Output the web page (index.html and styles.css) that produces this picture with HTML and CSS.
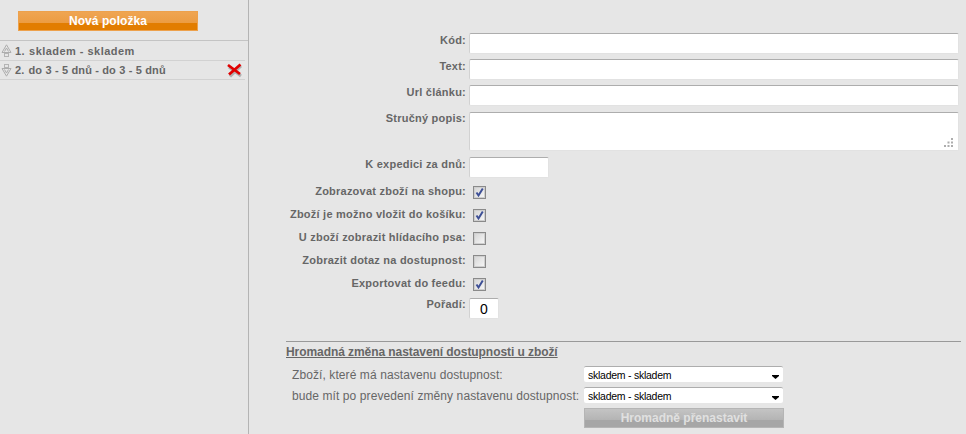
FILE: index.html
```html
<!DOCTYPE html>
<html lang="cs">
<head>
<meta charset="utf-8">
<title>Dostupnost</title>
<link rel="stylesheet" href="styles.css">
</head>
<body>
<div class="page">
  <aside class="sidebar">
    <button class="btn-orange" type="button">Nová položka</button>
    <ul class="items">
      <li class="item item-first">
        <svg class="arrow" width="11" height="13" viewBox="0 0 11 13"><path d="M5.500 0.800 L10 8.500 H1 Z M5.500 4 L3.500 7.500 M5.500 4 L7.500 7.500" fill="none" stroke="#adadad"/><rect x="3.500" y="9.500" width="4" height="3" fill="none" stroke="#b4b4b4"/></svg>
        <span class="num">1.</span><span>skladem - skladem</span>
      </li>
      <li class="item item-second">
        <svg class="arrow" width="11" height="13" viewBox="0 0 11 13"><rect x="3.500" y="0.500" width="4" height="3" fill="none" stroke="#b4b4b4"/><path d="M5.500 12.200 L10 4.500 H1 Z M5.500 9 L3.500 5.500 M5.500 9 L7.500 5.500" fill="none" stroke="#adadad"/></svg>
        <span class="num">2.</span><span>do 3 - 5 dnů - do 3 - 5 dnů</span>
        <svg class="del" width="17" height="15" viewBox="0 0 17 15"><path d="M3 4 L15 13 M15 3 L4 13.500" stroke="#8c8c8c" stroke-width="3" fill="none" opacity=".6"/><path d="M2 2 L14 11 M14.500 1.500 L3 11.500" stroke="#e00000" stroke-width="2.800" fill="none"/></svg>
      </li>
    </ul>
  </aside>
  <main class="content">
    <form class="form">
      <div class="row row-text"><label class="lbl">Kód:</label><input class="field" type="text"></div>
      <div class="row row-text"><label class="lbl">Text:</label><input class="field" type="text"></div>
      <div class="row row-text row-before-area"><label class="lbl">Url článku:</label><input class="field" type="text"></div>
      <div class="row row-area"><label class="lbl lbl-tight">Stručný popis:</label>
        <div class="area-wrap"><textarea class="field area"></textarea>
          <svg class="grip" width="9" height="9" viewBox="0 0 9 9"><path d="M7 0h2v2H7zM3.500 3.500h2v2h-2zM7 3.500h2v2H7zM0 7h2v2H0zM3.500 7h2v2h-2zM7 7h2v2H7z" fill="#adadad"/></svg>
        </div>
      </div>
      <div class="row row-text row-exped"><label class="lbl">K expedici za dnů:</label><input class="field short" type="text"></div>
      <div class="row row-check"><label class="lbl">Zobrazovat zboží na shopu:</label><input class="check" type="checkbox" checked></div>
      <div class="row row-check"><label class="lbl">Zboží je možno vložit do košíku:</label><input class="check" type="checkbox" checked></div>
      <div class="row row-check"><label class="lbl">U zboží zobrazit hlídacího psa:</label><input class="check" type="checkbox"></div>
      <div class="row row-check"><label class="lbl">Zobrazit dotaz na dostupnost:</label><input class="check" type="checkbox"></div>
      <div class="row row-check last-check"><label class="lbl">Exportovat do feedu:</label><input class="check" type="checkbox" checked></div>
      <div class="row row-order"><label class="lbl lbl-tight">Pořadí:</label><input class="field tiny" type="text" value="0"></div>
    </form>
    <section class="bulk">
      <h2 class="bulk-title">Hromadná změna nastavení dostupnosti u zboží</h2>
      <div class="bulk-row"><span class="bulk-lbl">Zboží, které má nastavenu dostupnost:</span><select class="sel"><option>skladem - skladem</option></select></div>
      <div class="bulk-row"><span class="bulk-lbl">bude mít po prevedení změny nastavenu dostupnost:</span><select class="sel"><option>skladem - skladem</option></select></div>
      <div class="bulk-row"><span class="bulk-lbl"></span><button class="btn-grey" type="button">Hromadně přenastavit</button></div>
    </section>
  </main>
</div>
</body>
</html>
```
FILE: styles.css
```css
* { box-sizing: border-box; }
html, body { margin: 0; padding: 0; }
body {
  width: 966px;
  height: 434px;
  overflow: hidden;
  background: #e6e6e6;
  font-family: "Liberation Sans", Arial, sans-serif;
  color: #666;
}
.page { display: flex; height: 434px; }
.sidebar {
  width: 249px;
  flex: none;
  border-right: 1px solid #b4b4b4;
  padding-top: 11px;
}
.btn-orange {
  display: block;
  width: 180px;
  height: 20px;
  margin: 0 0 9px 18px;
  padding: 0;
  border: 1px solid #eda14c;
  background: linear-gradient(#efa552 0, #ec9c42 60%, #e27d00 60%, #e27d00 100%);
  color: #fff;
  font: bold 12px/17px "Liberation Sans", Arial, sans-serif;
  letter-spacing: .05px;
  text-align: center;
}
.items { list-style: none; margin: 0; padding: 0; border-top: 1px solid #c4c4c4; }
.item {
  display: flex;
  align-items: center;
  width: 245px;
  border-bottom: 1px solid #d2d2d2;
  font-size: 11px;
  font-weight: bold;
  padding-left: 1px;
}
.item-first { height: 20px; letter-spacing: .46px; }
.item-second { height: 19px; letter-spacing: .15px; }
.arrow { flex: none; margin-right: 3px; }
.num { margin-right: 4px; }
.del { margin-left: auto; margin-right: 2px; }
.content { flex: 1; padding: 33px 5px 0 37px; min-width: 0; }
.row { display: flex; align-items: flex-start; }
.lbl {
  flex: none;
  width: 180px;
  margin-right: 3px;
  text-align: right;
  font-size: 11px;
  font-weight: bold;
  line-height: 13px;
  padding-top: 1px;
  letter-spacing: .23px;
  white-space: nowrap;
}
.lbl-tight { padding-top: 0; }
.field {
  display: block;
  width: 490px;
  height: 21px;
  margin: 0;
  padding: 1px 3px;
  background: #fff;
  border: 1px solid #e2e2e2;
  border-top-color: #adadad;
  border-left-color: #d2d2d2;
  border-radius: 2px;
  font: 14px "Liberation Sans", Arial, sans-serif;
  color: #000;
  outline: none;
}
.row-text { margin-bottom: 5px; }
.row-before-area { margin-bottom: 6px; }
.row-area { margin-bottom: 6px; }
.area-wrap { position: relative; width: 490px; height: 39px; }
.area { height: 39px; resize: none; }
.grip { position: absolute; right: 6px; bottom: 4px; }
.short { width: 80px; }
.tiny { width: 30px; text-align: center; padding: 1px 0; }
.row-exped { margin-bottom: 7px; }
.row-check { height: 23px; }
.last-check { height: 21px; }
.row-check .lbl { padding-top: 0; }
.check {
  appearance: none;
  -webkit-appearance: none;
  flex: none;
  width: 13px;
  height: 13px;
  margin: 1px 0 0 4px;
  border: 1px solid #8a8a8a;
  box-shadow: inset 0 0 0 1px #cfcfcf;
  background: linear-gradient(135deg, #d4d4d4, #f8f8f8);
}
.check:checked {
  background:
    url("data:image/svg+xml,%3Csvg xmlns='http://www.w3.org/2000/svg' width='11' height='11'%3E%3Cpath d='M2.500 5.500 L4.500 8.500 L8.800 1.500' fill='none' stroke='%233d4f96' stroke-width='2'/%3E%3C/svg%3E") no-repeat center,
    linear-gradient(135deg, #d4d4d4, #f8f8f8);
}
.bulk { margin-top: 22px; border-top: 1px solid #999; }
.bulk-title {
  margin: 0;
  padding-top: 3px;
  height: 24px;
  font-size: 12px;
  line-height: 14px;
  font-weight: bold;
  letter-spacing: -.07px;
  text-decoration: underline;
}
.bulk-row { display: flex; align-items: center; padding-left: 6px; margin-bottom: 5px; }
.bulk-lbl { flex: none; width: 292px; padding-top: 2px; font-size: 12px; letter-spacing: .09px; white-space: nowrap; }
.sel {
  appearance: none;
  -webkit-appearance: none;
  display: block;
  width: 199px;
  height: 16px;
  margin: 0;
  padding: 1px 0 0 4px;
  border: 0;
  border-top: 1px solid #adadad;
  border-radius: 2px;
  font: 10.500px/14px "Liberation Sans", Arial, sans-serif;
  letter-spacing: -.25px;
  color: #000;
  background: #fff url("data:image/svg+xml,%3Csvg xmlns='http://www.w3.org/2000/svg' width='7' height='4'%3E%3Cpath d='M0 0H7V1L3.500 4L0 1Z' fill='%23000'/%3E%3C/svg%3E") no-repeat 188px 8px;
}
.btn-grey {
  display: block;
  width: 200px;
  height: 20px;
  padding: 0;
  border: 1px solid #b5b5b5;
  background: linear-gradient(#c4c4c4 0, #b4b4b4 60%, #a6a6a6 60%, #a6a6a6 100%);
  color: #e0e0e0;
  font: bold 12px/17px "Liberation Sans", Arial, sans-serif;
  text-align: center;
}
```
